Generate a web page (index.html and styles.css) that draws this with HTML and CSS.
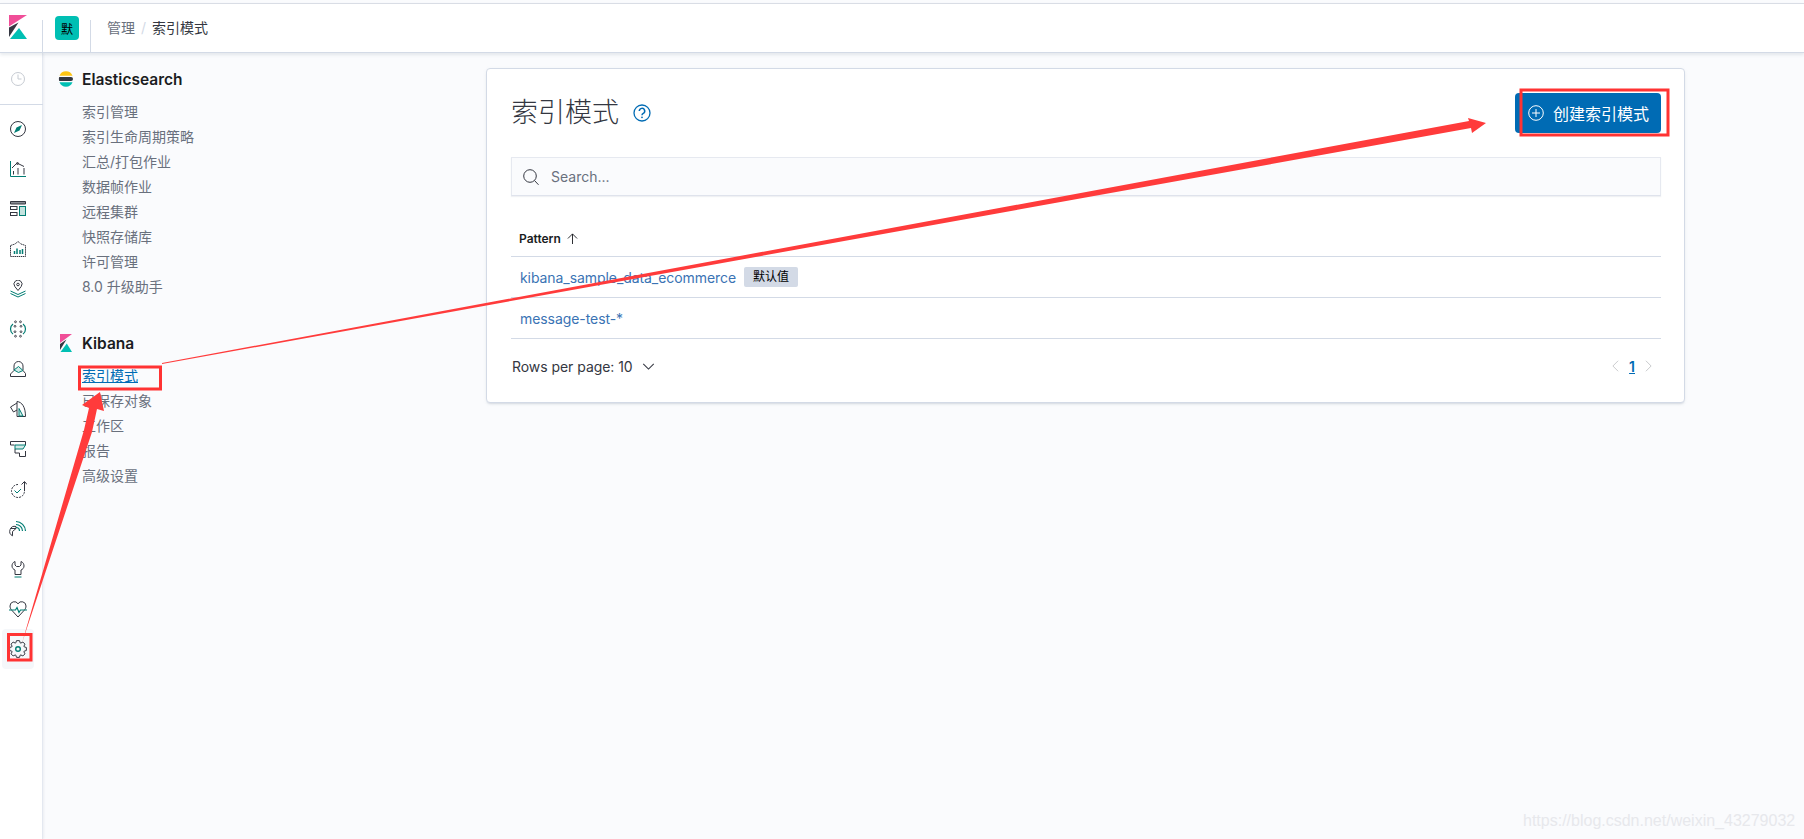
FILE: index.html
```html
<!DOCTYPE html>
<html lang="zh">
<head>
<meta charset="utf-8">
<title>索引模式 - Kibana</title>
<link rel="stylesheet" href="styles.css">
</head>
<body>
<div class="page">
  <header class="topbar">
    <div class="logo-cell">
      <svg class="logo" viewBox="0 0 18 24" aria-hidden="true">
        <path fill="#f04e98" d="M0 0h18L0 11.500z"/>
        <path fill="#343741" d="M0 12.500 9.500 7.500 0 22z"/>
        <path fill="#00bfb3" d="M1 24 10 13 18 24z"/>
      </svg>
    </div>
    <div class="space-cell"><span class="space-badge">默</span></div>
    <nav class="crumbs">
      <span class="crumb">管理</span><span class="crumb-sep">/</span><span class="crumb-current">索引模式</span>
    </nav>
  </header>

  <div class="body-row">
    <aside class="rail">
      <div class="rail-recent">
        <svg class="ico" viewBox="0 0 18 18" fill="none" stroke="#c6cbd2" stroke-width="1"><circle cx="9" cy="9" r="6.500"/><path d="M9 4.500V9h3.500"/></svg>
      </div>
      <div class="rail-list">
        <div class="rail-item"><svg class="ico" viewBox="0 0 18 18" fill="none" stroke="#343741" stroke-width="1"><circle cx="9" cy="9" r="7.500"/><path fill="#017d73" stroke="none" d="M13 5 10.500 10.500 5 13 7.500 7.500z"/></svg></div>
        <div class="rail-item"><svg class="ico" viewBox="0 0 18 18" fill="none" stroke="#343741" stroke-width="1"><path stroke="#017d73" d="M1.500 1v15.500h15.500"/><path d="M3 8 8 3l7 3.500"/><circle cx="8.500" cy="3.500" r="1"/><path d="M4.500 11v3.500M9 8v6.500M15 8v6.500"/></svg></div>
        <div class="rail-item"><svg class="ico" viewBox="0 0 18 18" fill="none" stroke="#343741" stroke-width="1"><path fill="#8a8d94" d="M1.500 1.500h15v2.500h-15z"/><rect x="1.500" y="6.500" width="6.500" height="3"/><rect x="1.500" y="12.500" width="6.500" height="3"/><rect x="10.500" y="6.500" width="6" height="9" stroke="#017d73" fill="#c4e3df"/></svg></div>
        <div class="rail-item"><svg class="ico" viewBox="0 0 18 18" fill="none" stroke="#343741" stroke-width="1" stroke-dasharray="1.500 .6"><path d="M1.500 5.500 6 4l3-2.500L12 4l4.500 1.500v11h-15z"/><path stroke="#017d73" stroke-dasharray="none" stroke-width="1.500" d="M5.500 14v-3M8 14V8.500M11 14v-4M13.500 14V9"/></svg></div>
        <div class="rail-item"><svg class="ico" viewBox="0 0 18 18" fill="none" stroke="#343741" stroke-width="1"><path d="M9 10.500 5.800 6.500a4 4 0 1 1 6.400 0z"/><circle cx="9" cy="4.500" r="1.300"/><path stroke="#017d73" d="M1.500 11 9 14.500 16.500 11M1.500 13.500 9 17l7.500-3.500"/></svg></div>
        <div class="rail-item"><svg class="ico" viewBox="0 0 18 18" fill="none" stroke="#017d73" stroke-width="1.200"><path d="M4 4C2 5.500 1.500 7 1.500 9s.5 3.500 2.500 5M14 4c2 1.500 2.500 3 2.500 5s-.5 3.500-2.500 5"/><g stroke="#343741" stroke-width=".9"><circle cx="6.500" cy="1.800" r=".9"/><circle cx="11.500" cy="1.800" r=".9"/><circle cx="6" cy="6.300" r=".9"/><circle cx="12" cy="6.300" r=".9"/><circle cx="6" cy="11.700" r=".9"/><circle cx="12" cy="11.700" r=".9"/><circle cx="6.500" cy="16.200" r=".9"/><circle cx="11.500" cy="16.200" r=".9"/></g></svg></div>
        <div class="rail-item"><svg class="ico" viewBox="0 0 18 18" fill="none" stroke="#343741" stroke-width="1"><path d="M1.500 16.500v-2.500l3.500-3.500V6a4.500 4.500 0 0 1 9 0v4.500l2.500 3v3z"/><path stroke="#017d73" fill="#d3ebe8" d="M5 10 9.500 6.500l4.500 4-4.500 2z"/></svg></div>
        <div class="rail-item"><svg class="ico" viewBox="0 0 18 18" fill="none" stroke="#343741" stroke-width="1"><path d="M8 3 1.500 7l3 5 3.500-2"/><path d="M8 1.500c5 .5 8.500 5.500 8.500 15H8z"/><path stroke="#017d73" fill="#d3ebe8" d="M10 8.500l4 7.500h-4z"/></svg></div>
        <div class="rail-item"><svg class="ico" viewBox="0 0 18 18" fill="none" stroke="#343741" stroke-width="1"><path d="M5.500 5H1.500V1.500h15V5"/><path stroke="#017d73" fill="#d3ebe8" d="M6 5h10.500L14 9H6z"/><path d="M6 9v4h4.500v3.500h6V11"/></svg></div>
        <div class="rail-item"><svg class="ico" viewBox="0 0 18 18" fill="none" stroke="#343741" stroke-width="1"><path stroke-dasharray="2 1" d="M9 4.500a6.500 6.500 0 1 0 6.500 6.500"/><path d="M15.500 11V2M12.500 4.500l3-3 2.500 3"/><path stroke="#017d73" d="M5.500 10.500l2.500 2.500 4-4"/></svg></div>
        <div class="rail-item"><svg class="ico" viewBox="0 0 18 18" fill="none" stroke="#343741" stroke-width="1"><path d="M7 8.500V6.500A5 5 0 0 0 3.500 15.800V11.500l3.500-3H1.500"/><path stroke="#017d73" stroke-width="1.200" d="M7 1.500c5 0 9.500 4.500 9.500 9.500M7 4.500c3.500 0 6.500 3 6.500 6.500M7 7.500c2 0 3.500 1.500 3.500 3.500"/></svg></div>
        <div class="rail-item"><svg class="ico" viewBox="0 0 18 18" fill="none" stroke="#343741" stroke-width="1"><path d="M6 1.500C3.500 2.500 3 4.500 3 6c0 2 1.500 3.500 3 4v4.500h6V10c1.500-.5 3-2 3-4 0-1.500-.5-3.500-3-4.500V5l-1.500 1.500h-3L6 5z"/><path stroke="#017d73" d="M5.500 17h7"/></svg></div>
        <div class="rail-item"><svg class="ico" viewBox="0 0 18 18" fill="none" stroke="#343741" stroke-width="1"><path d="M3 10.500C1.500 9 1 7.500 1 6a4.300 4.300 0 0 1 8-2.200A4.300 4.300 0 0 1 17 6c0 1.500-.5 3-2 4.500L9 17z"/><path stroke="#017d73" stroke-width="1.200" d="M0 10h6.500L8 7.500 10 12.500 11.500 10H18"/></svg></div>
        <div class="rail-item is-active"><svg class="ico" viewBox="0 0 18 18" fill="none" stroke="#343741" stroke-width="1"><path d="M6.780 2.890 7.520.63h2.960l.74 2.260.53.220 2.130-1.070 2.080 2.080-1.070 2.130.22.530 2.260.74v2.960l-2.260.74-.22.530 1.070 2.130-2.080 2.080-2.130-1.070-.53.220-.74 2.260H7.520l-.74-2.260-.53-.220-2.130 1.070-2.080-2.080 1.070-2.130-.22-.53-2.260-.74V7.520l2.260-.74.220-.53-1.070-2.130 2.080-2.080 2.130 1.070z"/><circle cx="9" cy="9" r="2.300" stroke="#017d73" stroke-width="1.400"/></svg></div>
      </div>
    </aside>

    <main class="main">
      <nav class="sidenav">
        <section class="sidenav-group">
          <h2 class="sidenav-title">
            <svg class="side-ico" viewBox="0 0 16 16" aria-hidden="true">
              <path fill="#fec514" d="M1.500 4.700A7 7 0 0 1 14.500 4.700z"/>
              <path fill="#343741" d="M1.200 6H13a2 2 0 0 1 0 4H1.200a6 6 0 0 1 0-4z"/>
              <path fill="#00bfb3" d="M1.500 11.300h13A7 7 0 0 1 1.500 11.300z"/>
            </svg>
            Elasticsearch
          </h2>
          <a class="sidenav-link">索引管理</a>
          <a class="sidenav-link">索引生命周期策略</a>
          <a class="sidenav-link">汇总/打包作业</a>
          <a class="sidenav-link">数据帧作业</a>
          <a class="sidenav-link">远程集群</a>
          <a class="sidenav-link">快照存储库</a>
          <a class="sidenav-link">许可管理</a>
          <a class="sidenav-link">8.0 升级助手</a>
        </section>
        <section class="sidenav-group">
          <h2 class="sidenav-title">
            <svg class="side-ico" viewBox="0 0 16 20" aria-hidden="true">
              <path fill="#f04e98" d="M2 1h12L2 10z"/>
              <path fill="#343741" d="M2 11 8.500 6.500 2 17z"/>
              <path fill="#00bfb3" d="M2.500 19 8.800 10.500 14 19z"/>
            </svg>
            Kibana
          </h2>
          <a class="sidenav-link is-current">索引模式</a>
          <a class="sidenav-link">已保存对象</a>
          <a class="sidenav-link">工作区</a>
          <a class="sidenav-link">报告</a>
          <a class="sidenav-link">高级设置</a>
        </section>
      </nav>

      <section class="panel">
        <div class="panel-head">
          <h1 class="panel-title">索引模式</h1>
          <svg class="help" viewBox="0 0 18 18" fill="none" stroke="#006bb4" stroke-width="1.300" aria-hidden="true">
            <circle cx="9" cy="9" r="8"/>
            <path stroke-width="1.500" d="M6.300 7.100A2.700 2.700 0 1 1 10.300 9.400C9.400 9.900 9 10.300 9 11.200"/>
            <circle cx="9" cy="13.300" r=".9" fill="#006bb4" stroke="none"/>
          </svg>
          <button class="btn-create">
            <svg class="btn-ico" viewBox="0 0 16 16" fill="none" stroke="#fff" stroke-width="1" aria-hidden="true"><circle cx="8" cy="8" r="7.300"/><path d="M8 4v8M4 8h8"/></svg>
            创建索引模式
          </button>
        </div>

        <div class="search">
          <svg class="search-ico" viewBox="0 0 16 16" fill="none" stroke="#343741" stroke-width="1" aria-hidden="true"><circle cx="7" cy="7" r="6.300"/><path d="M11.500 11.500 15.500 15.800"/></svg>
          <span class="search-ph">Search...</span>
        </div>

        <div class="table">
          <div class="table-head">
            <span class="th">Pattern</span>
            <svg class="sort-ico" viewBox="0 0 12 12" fill="none" stroke="#1a1c21" stroke-width="1" aria-hidden="true"><path d="M6 12V1M1 6l5-5 5 5"/></svg>
          </div>
          <div class="table-row"><a class="row-link">kibana_sample_data_ecommerce</a><span class="badge">默认值</span></div>
          <div class="table-row"><a class="row-link">message-test-*</a></div>
        </div>

        <div class="table-foot">
          <span class="rows">Rows per page: 10</span>
          <svg class="rows-chev" viewBox="0 0 14 8" fill="none" stroke="#343741" stroke-width="1.200" aria-hidden="true"><path d="M1 1l6 6 6-6"/></svg>
          <div class="pager">
            <svg class="pager-chev" viewBox="0 0 8 14" fill="none" stroke="#c2c3c6" stroke-width="1" aria-hidden="true"><path d="M7 1 1 7l6 6"/></svg>
            <span class="pager-num">1</span>
            <svg class="pager-chev" viewBox="0 0 8 14" fill="none" stroke="#c2c3c6" stroke-width="1" aria-hidden="true"><path d="M1 1l6 6-6 6"/></svg>
          </div>
        </div>
      </section>
    </main>
  </div>

  <svg class="annot" viewBox="0 0 1804 839" aria-hidden="true">
    <g fill="none" stroke="#ff3333" stroke-width="3">
      <rect x="8.500" y="634.500" width="22.500" height="25.500"/>
      <rect x="79.500" y="367" width="81" height="22"/>
      <rect x="1521" y="90" width="147" height="45"/>
    </g>
    <g fill="#ff3b3b">
      <path d="M22 643 84 430 89 408 82 405 100 392 104 411 97 409 92 432z"/>
      <path d="M162 363 1469 121 1468 118 1486 123 1472 133 1471 128 162 364z"/>
    </g>
  </svg>
  <div class="watermark">https://blog.csdn.net/weixin_43279032</div>
</div>
</body>
</html>
```

FILE: styles.css
```css
* { box-sizing: border-box; }

html, body {
  margin: 0;
  height: 100%;
}

body {
  background: #fafbfd;
  color: #343741;
  font-family: Inter, "Noto Sans CJK SC", sans-serif;
  font-size: 14px;
  overflow: hidden;
}

.page {
  position: relative;
  width: 1804px;
  height: 839px;
  display: flex;
  flex-direction: column;
  overflow: hidden;
}

/* Top bar */
.topbar {
  flex: none;
  height: 50px;
  margin-top: 3px;
  background: #fff;
  border-top: 1px solid #d9dde5;
  border-bottom: 1px solid #d3dae6;
  box-shadow: 0 2px 3px rgba(152, 162, 179, .22);
  display: flex;
  align-items: stretch;
  position: relative;
  z-index: 2;
}

.logo-cell {
  width: 43px;
  padding: 11px 0 0 9px;
  position: relative;
}

.logo-cell::after {
  content: "";
  position: absolute;
  right: 0;
  top: 16px;
  bottom: 0;
  width: 1px;
  background: #d3dae6;
}

.logo { display: block; width: 18px; height: 24px; }

.space-cell {
  width: 48px;
  padding: 12px 0 0 12px;
  position: relative;
}

.space-cell::after {
  content: "";
  position: absolute;
  right: 0;
  top: 16px;
  bottom: 0;
  width: 1px;
  background: #d3dae6;
}

.space-badge {
  display: flex;
  align-items: center;
  justify-content: center;
  width: 24px;
  height: 24px;
  border-radius: 4px;
  background: #00bfb3;
  color: #000;
  font-size: 12px;
}

.crumbs {
  display: flex;
  align-items: center;
  padding: 0 0 2px 16px;
  font-size: 14px;
}

.crumb { color: #69707d; }
.crumb-sep { color: #d3dae6; margin: 0 6px; }
.crumb-current { color: #343741; }

/* Layout row */
.body-row {
  flex: 1;
  display: flex;
  min-height: 0;
}

/* Icon rail */
.rail {
  flex: none;
  width: 43px;
  background: #fff;
  border-right: 1px solid #e4e8f0;
  box-shadow: 1px 0 2px rgba(152, 162, 179, .15);
}

.rail-recent {
  height: 52px;
  display: flex;
  align-items: center;
  justify-content: center;
  border-bottom: 1px solid #d3dae6;
  padding-right: 7px;
  padding-top: 1px;
  margin-right: -1px;
}

.rail-list {
  padding-top: 4px;
}

.rail-item {
  height: 40px;
  display: flex;
  align-items: center;
  padding-left: 9px;
}

.rail-item.is-active {
  background: #f5f7fa;
  border-radius: 4px;
  margin: 0 8px 0 2px;
  padding-left: 7px;
}

.ico { width: 18px; height: 18px; display: block; }

/* Main */
.main {
  flex: 1;
  display: flex;
  align-items: flex-start;
  min-width: 0;
}

.sidenav {
  flex: none;
  width: 443px;
  padding: 14px 0 0 15px;
}

.sidenav-group + .sidenav-group { margin-top: 32px; }

.sidenav-title {
  margin: 0 0 8px;
  height: 24px;
  display: flex;
  align-items: center;
  gap: 8px;
  font-size: 15.500px;
  font-weight: 600;
  color: #1a1c21;
}

.side-ico { width: 16px; height: 16px; flex: none; }
.sidenav-group + .sidenav-group .side-ico { height: 20px; }

.sidenav-link {
  display: block;
  height: 25px;
  line-height: 25px;
  padding-left: 24px;
  font-size: 14px;
  color: #69707d;
}

.sidenav-link.is-current {
  color: #006bb4;
  text-decoration: underline;
}

/* Panel */
.panel {
  flex: none;
  width: 1199px;
  height: 335px;
  margin-top: 15px;
  padding: 24px 23px 0 24px;
  background: #fff;
  border: 1px solid #d3dae6;
  border-radius: 4px;
  box-shadow: 0 2px 2px -1px rgba(152, 162, 179, .3), 0 1px 5px -2px rgba(152, 162, 179, .3);
}

.panel-head {
  height: 40px;
  display: flex;
  align-items: center;
}

.panel-title {
  margin: 0;
  font-size: 27px;
  font-weight: 300;
  color: #343741;
  line-height: 40px;
}

.help { width: 18px; height: 18px; margin-left: 14px; }

.btn-create {
  margin-left: auto;
  width: 146px;
  height: 40px;
  padding: 0 0 0 13px;
  display: flex;
  align-items: center;
  gap: 9px;
  border: 0;
  border-radius: 4px;
  background: #006bb4;
  color: #fff;
  font-family: inherit;
  font-size: 16px;
  font-weight: 400;
}

.btn-ico { width: 16px; height: 16px; flex: none; }

.search {
  margin-top: 24px;
  height: 39px;
  display: flex;
  align-items: center;
  padding-left: 11px;
  background: #fafbfd;
  border: 1px solid #e6e9f0;
  border-bottom-color: #dfe3ec;
  box-shadow: 0 1px 1px rgba(152, 162, 179, .15);
}

.search-ico { width: 16px; height: 16px; flex: none; }

.search-ph {
  margin-left: 12px;
  font-size: 14px;
  color: #69707d;
}

.table-head {
  height: 61px;
  display: flex;
  align-items: flex-end;
  padding: 0 0 9px 8px;
  border-bottom: 1px solid #d3dae6;
}

.th {
  font-size: 12px;
  font-weight: 600;
  color: #1a1c21;
  line-height: 16px;
}

.sort-ico { width: 11px; height: 11px; margin: 0 0 3px 6px; }

.table-row {
  height: 41px;
  display: flex;
  align-items: center;
  padding-left: 9px;
  border-bottom: 1px solid #d3dae6;
}

.row-link { color: #3a73b4; font-size: 14px; letter-spacing: -.07px; }

.badge {
  margin-left: 8px;
  height: 20px;
  padding: 0 9px;
  line-height: 20px;
  border-radius: 2px;
  background: #d3dae6;
  color: #000;
  font-size: 12px;
}

.table-foot {
  height: 54px;
  display: flex;
  align-items: center;
  padding-left: 1px;
}

.rows { font-size: 14px; color: #343741; letter-spacing: -.05px; }

.rows-chev { width: 13px; height: 7px; margin-left: 9px; }

.pager {
  margin-left: auto;
  display: flex;
  align-items: center;
  gap: 10px;
  padding-right: 9px;
}

.pager-chev { width: 7px; height: 14px; }

.pager-num {
  font-size: 14px;
  font-weight: 600;
  color: #006bb4;
  text-decoration: underline;
}

/* Hand-drawn screenshot annotations and watermark */
.annot {
  position: absolute;
  left: 0;
  top: 0;
  width: 1804px;
  height: 839px;
  z-index: 5;
  pointer-events: none;
}

.watermark {
  position: absolute;
  left: 1523px;
  top: 811px;
  z-index: 5;
  font-family: "Liberation Sans", sans-serif;
  font-size: 16px;
  line-height: 20px;
  color: #e7e8ec;
  white-space: nowrap;
}
```
